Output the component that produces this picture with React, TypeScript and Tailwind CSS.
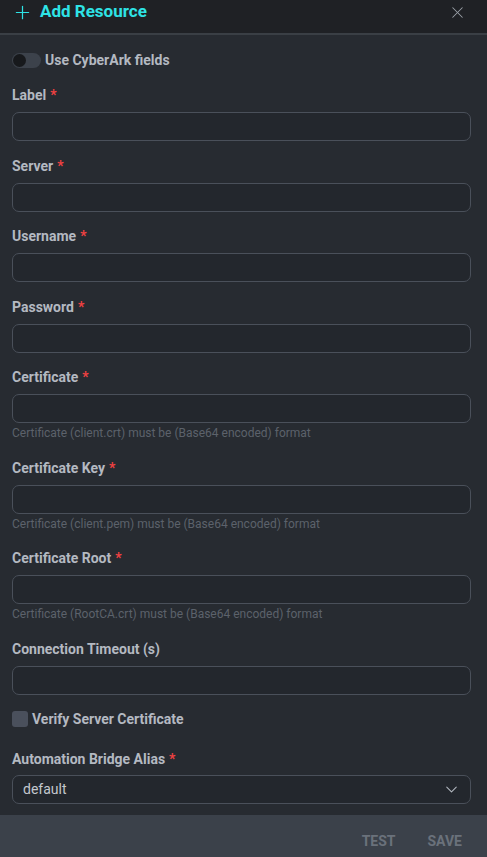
import { Plus, X, ChevronDown } from "lucide-react";

type Field = {
  label: string;
  required?: boolean;
  help?: string;
};

const fields: Field[] = [
  { label: "Label", required: true },
  { label: "Server", required: true },
  { label: "Username", required: true },
  { label: "Password", required: true },
  {
    label: "Certificate",
    required: true,
    help: "Certificate (client.crt) must be (Base64 encoded) format",
  },
  {
    label: "Certificate Key",
    required: true,
    help: "Certificate (client.pem) must be (Base64 encoded) format",
  },
  {
    label: "Certificate Root",
    required: true,
    help: "Certificate (RootCA.crt) must be (Base64 encoded) format",
  },
  { label: "Connection Timeout (s)" },
];

function FieldLabel({ label, required }: { label: string; required?: boolean }) {
  return (
    <div className="h-5 leading-5 text-[14px] font-bold text-[#b4b9c1]">
      {label}
      {required && <span className="ml-1 text-[#f04141]">*</span>}
    </div>
  );
}

function App() {
  return (
    <div
      className="w-[487px] h-[857px] flex flex-col bg-[#272b31] overflow-hidden"
      style={{ fontFamily: "Roboto, 'Liberation Sans', sans-serif" }}
    >
      <div className="h-[35px] shrink-0 flex items-start justify-between bg-[#1f2125] border-b-2 border-[#3a3f45] pl-[12px] pr-[20px] pt-[1px]">
        <div className="flex items-center gap-[7px] h-[22px]">
          <Plus size={21} strokeWidth={1.4} className="text-[#2ee3e6]" />
          <span className="text-[17px] font-bold text-[#2ee3e6]">
            Add Resource
          </span>
        </div>
        <X size={19} strokeWidth={1.3} className="text-[#9aa0a8] mt-[2px]" />
      </div>

      <div className="flex-1 pl-3 pr-4 pt-[15px]">
        <div className="flex items-center h-5 gap-1">
          <div className="w-[29px] h-[15px] rounded-full bg-[#3c424b] flex items-center pl-[1px]">
            <div className="w-[13px] h-[13px] rounded-full bg-[#17191c]" />
          </div>
          <span className="text-[14px] font-bold text-[#b4b9c1]">
            Use CyberArk fields
          </span>
        </div>

        <div className="mt-[15px]">
          {fields.map((f) => (
            <div key={f.label} className="mb-[14.5px]">
              <FieldLabel label={f.label} required={f.required} />
              <div className="mt-[7px] h-[29px] rounded-[7px] border border-[#4a505a] bg-[#23272d]" />
              {f.help && (
                <div className="leading-5 text-[12px] text-[#5c626b]">
                  {f.help}
                </div>
              )}
            </div>
          ))}
        </div>

        <div className="flex items-center h-5 gap-[4px] mt-[4px]">
          <div className="w-4 h-4 rounded-[3px] bg-[#4a505c]" />
          <span className="text-[14px] font-bold text-[#b4b9c1]">
            Verify Server Certificate
          </span>
        </div>

        <div className="mt-5">
          <FieldLabel label="Automation Bridge Alias" required />
          <div className="mt-[6px] h-[29px] rounded-[7px] border border-[#4a505a] bg-[#23272d] flex items-center justify-between pl-[10px] pr-[9px]">
            <span className="text-[14px] text-[#c4c8ce]">default</span>
            <ChevronDown size={19} strokeWidth={1.3} className="text-[#b4b9c1]" />
          </div>
        </div>
      </div>

      <div className="h-[42px] shrink-0 bg-[#3b414a] flex items-center justify-end gap-8 pr-[25px] pt-[10px]">
        <span className="text-[14px] font-bold text-[#6a717b]">TEST</span>
        <span className="text-[14px] font-bold text-[#6a717b]">SAVE</span>
      </div>
    </div>
  );
}

export default App;
